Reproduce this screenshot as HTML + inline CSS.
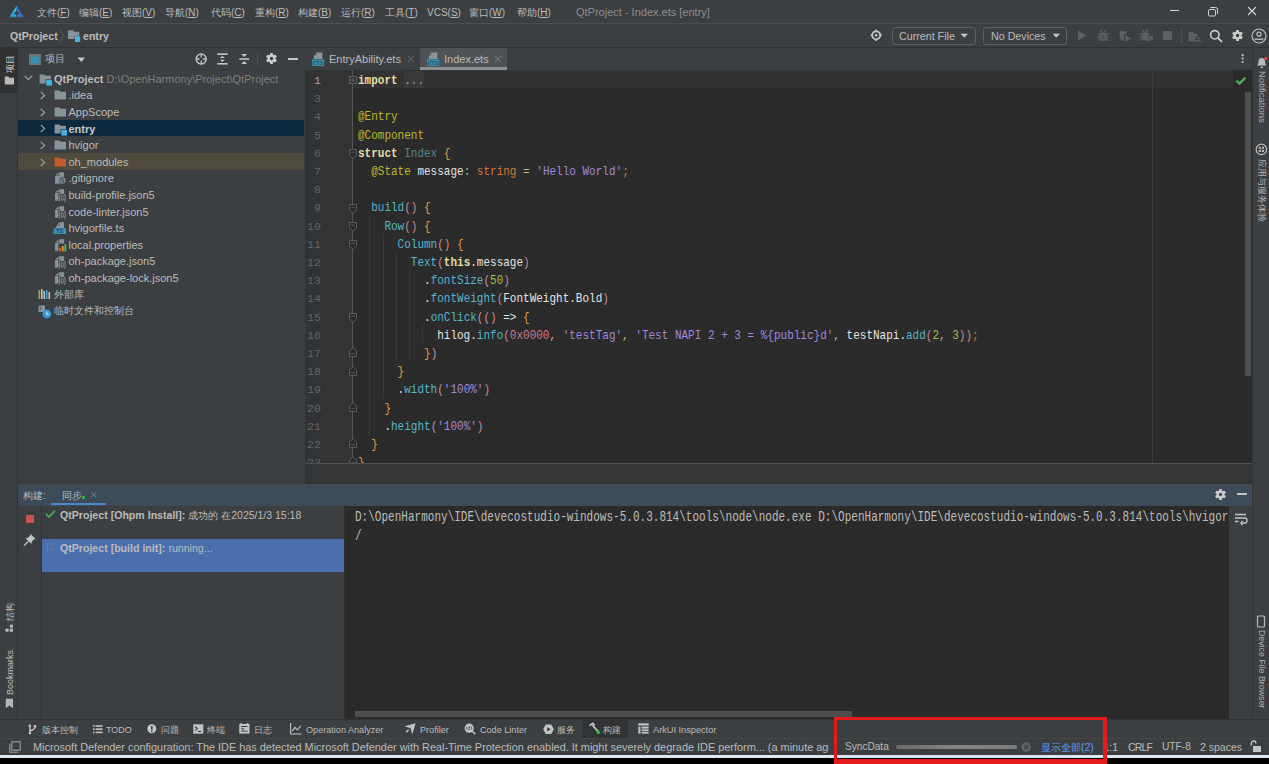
<!DOCTYPE html>
<html><head><meta charset="utf-8">
<style>
*{margin:0;padding:0;box-sizing:border-box}
html,body{width:1269px;height:764px;overflow:hidden;background:#3c3f41}
body{position:relative;font-family:"Liberation Sans",sans-serif;font-size:11px;color:#bbbbbb}
.a{position:absolute}
.t{position:absolute;white-space:nowrap;line-height:14px}
svg.i{position:absolute;overflow:visible}
.mono{font-family:"Liberation Mono",monospace}
#code .l{position:absolute;left:358px;white-space:pre;line-height:18px;transform:scaleY(1.1);transform-origin:0 11.9px;font-family:"Liberation Mono",monospace;font-size:11px;color:#a9b7c6}
.kw{color:#e6dca6;font-weight:bold}
.an{color:#bbb529}
.cl{color:#548585}
.br{color:#e09d3a}
.fn{color:#56b3c9}
.pa{color:#c98aa0}
.st{color:#a087dd}
.ty{color:#cc7832}
.wh{color:#e4e4e4}
.nu{color:#a7c140}
.hx{color:#c9778d}
.op{color:#b8b88c}
.fold{color:#9a9a9a}
.ln{position:absolute;left:305px;width:16px;text-align:right;font-family:"Liberation Mono",monospace;font-size:11.6px;line-height:18px;color:#606366}
.vt{position:absolute;white-space:nowrap;line-height:10px;transform-origin:0 0}
.cj{font-size:10px}
.tt{font-size:9.4px}
</style></head><body>
<div class="a" style="left:0px;top:23px;width:1269px;height:1px;background:#4b4e50;"></div>
<svg class="i" style="left:8px;top:5px;" width="17" height="14" viewBox="0 0 17 14"><defs><linearGradient id="lg1" x1="0" y1="0" x2="0" y2="1"><stop offset="0" stop-color="#43dcec"/><stop offset="1" stop-color="#19a6dc"/></linearGradient>
<linearGradient id="lg2" x1="0" y1="0" x2="0" y2="1"><stop offset="0" stop-color="#2574cf"/><stop offset="1" stop-color="#3f6fd9"/></linearGradient></defs>
<path d="M8.6 1.5 L2 11.8 H7.9 V9.4 H5 L8.6 4.5 Z" fill="url(#lg1)" stroke="url(#lg1)" stroke-width="0.6" stroke-linejoin="round"/>
<path d="M8.6 1.5 L15.2 11.8 H9.3 V9.4 H12.2 L8.6 4.5 Z" fill="url(#lg2)" stroke="url(#lg2)" stroke-width="0.6" stroke-linejoin="round"/></svg>
<div class="t" style="left:37px;top:5.5px;font-size:10px">文件(<u>F</u>)</div>
<div class="t" style="left:79px;top:5.5px;font-size:10px">编辑(<u>E</u>)</div>
<div class="t" style="left:122px;top:5.5px;font-size:10px">视图(<u>V</u>)</div>
<div class="t" style="left:165px;top:5.5px;font-size:10px">导航(<u>N</u>)</div>
<div class="t" style="left:211px;top:5.5px;font-size:10px">代码(<u>C</u>)</div>
<div class="t" style="left:255px;top:5.5px;font-size:10px">重构(<u>R</u>)</div>
<div class="t" style="left:298px;top:5.5px;font-size:10px">构建(<u>B</u>)</div>
<div class="t" style="left:341px;top:5.5px;font-size:10px">运行(<u>R</u>)</div>
<div class="t" style="left:385px;top:5.5px;font-size:10px">工具(<u>T</u>)</div>
<div class="t" style="left:427px;top:5.5px;font-size:10px">VCS(<u>S</u>)</div>
<div class="t" style="left:469px;top:5.5px;font-size:10px">窗口(<u>W</u>)</div>
<div class="t" style="left:517px;top:5.5px;font-size:10px">帮助(<u>H</u>)</div>
<div class="t" style="left:576px;top:5px;color:#8a8d8f">QtProject - Index.ets [entry]</div>
<div class="a" style="left:1170px;top:10px;width:9px;height:1px;background:#d4d4d4;"></div>
<svg class="i" style="left:1207px;top:6px;" width="12" height="11" viewBox="0 0 12 11"><rect x="1.5" y="3.5" width="7" height="6.5" rx="1.2" fill="none" stroke="#d4d4d4" stroke-width="1"/><path d="M3.5 1.5 H8.5 Q10.5 1.5 10.5 3.5 V8" fill="none" stroke="#d4d4d4" stroke-width="1"/></svg>
<svg class="i" style="left:1247px;top:6px;" width="10" height="10" viewBox="0 0 10 10"><path d="M1 1 L9 9 M9 1 L1 9" stroke="#d4d4d4" stroke-width="1.1"/></svg>
<div class="a" style="left:0px;top:47px;width:1269px;height:1px;background:#323232;"></div>
<div class="t" style="left:10px;top:29px;font-weight:bold;font-size:10.6px">QtProject</div>
<svg class="i" style="left:59px;top:29px;" width="6" height="13" viewBox="0 0 6 13"><path d="M1 0.5 L4.5 6.3 L1 12.3" fill="none" stroke="#5b5e60" stroke-width="1"/></svg>
<svg class="i" style="left:67px;top:29px;" width="14" height="14" viewBox="0 0 14 14"><path d="M1 1.2 H5.6 L7.2 2.8 H12.3 V10.1 H1 Z" fill="#87939a"/><rect x="7.6" y="7.2" width="5.5" height="5.8" fill="#3b3f41"/><rect x="8" y="7.4" width="5.2" height="5.6" fill="#40b6e0"/></svg>
<div class="t" style="left:83px;top:29px;font-weight:bold;font-size:10.6px">entry</div>
<svg class="i" style="left:870px;top:29px;" width="13" height="13" viewBox="0 0 13 13"><circle cx="6.2" cy="6.3" r="4" fill="none" stroke="#c4c4c4" stroke-width="1.8"/><circle cx="6.2" cy="6.3" r="1.3" fill="#c4c4c4"/><path d="M6.2 0.6 V2.4 M6.2 10.2 V12 M0.6 6.3 H2.4 M10 6.3 H11.8" stroke="#c4c4c4" stroke-width="1.6"/></svg>
<div class="a" style="left:892px;top:27px;width:84px;height:18px;background:transparent;border:1px solid #5b5e60;border-radius:3px"></div>
<div class="t" style="left:899px;top:29px;font-size:10.7px">Current File</div>
<svg class="i" style="left:960px;top:33px;" width="9" height="6" viewBox="0 0 9 6"><path d="M0.5 0.8 H8 L4.25 4.8 Z" fill="#c4c4c4"/></svg>
<div class="a" style="left:983px;top:27px;width:84px;height:18px;background:transparent;border:1px solid #5b5e60;border-radius:3px"></div>
<div class="t" style="left:991px;top:29px;font-size:10.7px">No Devices</div>
<svg class="i" style="left:1052px;top:33px;" width="9" height="6" viewBox="0 0 9 6"><path d="M0.5 0.8 H8 L4.25 4.8 Z" fill="#c4c4c4"/></svg>
<svg class="i" style="left:1077px;top:30px;" width="10" height="11" viewBox="0 0 10 11"><path d="M1 0.6 L9.2 5.5 L1 10.4 Z" fill="#5d5f61"/></svg>
<svg class="i" style="left:1096px;top:29px;" width="14" height="14" viewBox="0 0 14 14"><ellipse cx="7" cy="7.6" rx="3.4" ry="4.4" fill="#5d5f61"/><path d="M4.2 1 L5.6 3.2 M9.8 1 L8.4 3.2 M1.5 5.2 H4 M10 5.2 H12.5 M1.5 8.2 H4 M10 8.2 H12.5 M1.8 11.4 L4 10.2 M12.2 11.4 L10 10.2" stroke="#5d5f61" stroke-width="1.5"/><rect x="5.6" y="6.4" width="2.8" height="1" fill="#3c3f41"/><rect x="5.6" y="8.6" width="2.8" height="1" fill="#3c3f41"/></svg>
<svg class="i" style="left:1118px;top:30px;" width="15" height="13" viewBox="0 0 15 13"><path d="M1.6 1.2 H8.5 V4 H6.2 V9.6 L4.6 11.2 Q1.6 9.2 1.6 6.2 Z" fill="#5d5f61"/><path d="M7.4 5.2 L13.2 8.6 L7.4 12 Z" fill="#5d5f61"/></svg>
<svg class="i" style="left:1139px;top:29px;" width="15" height="14" viewBox="0 0 15 14"><ellipse cx="6.2" cy="7.4" rx="3.2" ry="4.2" fill="#5d5f61"/><path d="M3.6 1 L5 3 M8.8 1 L7.4 3 M1 5 H3.4 M9 5 H11 M1 8.2 H3.4 M1.4 11.2 L3.4 10" stroke="#5d5f61" stroke-width="1.5"/><path d="M8.2 12.6 L12.6 8.2 M9.6 7.8 H13 V11.2" fill="none" stroke="#5d5f61" stroke-width="1.6"/></svg>
<div class="a" style="left:1163px;top:31px;width:9px;height:9px;background:#5d5f61;"></div>
<div class="a" style="left:1181px;top:28px;width:1px;height:16px;background:#4d5052;"></div>
<svg class="i" style="left:1188px;top:31px;" width="14" height="12" viewBox="0 0 14 12"><path d="M0.6 1 H4.8 L6.2 2.4 H9.4 V5.6 H7 V10.6 H0.6 Z" fill="#5d5f61"/><rect x="7.8" y="6.4" width="2" height="1.8" fill="#5d5f61"/><rect x="10.6" y="6.4" width="2" height="1.8" fill="#5d5f61"/><rect x="7.8" y="9" width="2" height="1.8" fill="#5d5f61"/><rect x="10.6" y="9" width="2" height="1.8" fill="#5d5f61"/></svg>
<svg class="i" style="left:1209px;top:29px;" width="14" height="14" viewBox="0 0 14 14"><circle cx="5.8" cy="5.8" r="4.2" fill="none" stroke="#cbcbcb" stroke-width="1.6"/><path d="M8.9 8.9 L12.4 12.4" stroke="#cbcbcb" stroke-width="1.9" stroke-linecap="round"/></svg>
<svg class="i" style="left:1232px;top:30px;" width="11" height="11" viewBox="0 0 11 11"><rect x="4.07" y="0" width="2.86" height="11.00" rx="0.55" fill="#cbcbcb" transform="rotate(0 5.5 5.5)"/><rect x="4.07" y="0" width="2.86" height="11.00" rx="0.55" fill="#cbcbcb" transform="rotate(60 5.5 5.5)"/><rect x="4.07" y="0" width="2.86" height="11.00" rx="0.55" fill="#cbcbcb" transform="rotate(120 5.5 5.5)"/><circle cx="5.5" cy="5.5" r="3.96" fill="#cbcbcb"/><circle cx="5.5" cy="5.5" r="1.65" fill="#3c3f41"/></svg>
<svg class="i" style="left:1251px;top:28px;" width="16" height="16" viewBox="0 0 16 16"><circle cx="8" cy="8" r="7" fill="none" stroke="#c4c4c4" stroke-width="1.1"/><circle cx="8" cy="6.2" r="2" fill="none" stroke="#c4c4c4" stroke-width="1.2"/><path d="M3.6 11.2 H12.4" stroke="#c4c4c4" stroke-width="1.3"/></svg>
<div class="a" style="left:17px;top:48px;width:1px;height:671px;background:#323232;"></div>
<div class="a" style="left:0px;top:48px;width:17px;height:45px;background:#2f3133;"></div>
<div class="vt" style="left:4.6px;top:72.5px;transform:rotate(-90deg);color:#d0d0d0;font-size:9.4px">项目</div>
<svg class="i" style="left:4px;top:76px;" width="11" height="9" viewBox="0 0 11 9"><path d="M0.8 0.6 H4.2 L5.4 1.8 H10 V8.4 H0.8 Z" fill="#b8b8b8"/></svg>
<div class="vt cj" style="left:5px;top:621px;transform:rotate(-90deg);font-size:9px">结构</div>
<svg class="i" style="left:5px;top:624px;" width="9" height="9" viewBox="0 0 9 9"><rect x="0.5" y="4.6" width="3.2" height="3.2" fill="#b5b5b5"/><rect x="4.8" y="4.6" width="3.2" height="3.2" fill="#b5b5b5"/><rect x="4.8" y="0.6" width="3.2" height="3" fill="#b5b5b5"/></svg>
<div class="vt" style="left:4.5px;top:695px;transform:rotate(-90deg);font-size:9px">Bookmarks</div>
<svg class="i" style="left:5px;top:698px;" width="9" height="11" viewBox="0 0 9 11"><path d="M0.8 0.8 H8 V10.2 L4.4 7.4 L0.8 10.2 Z" fill="#b5b5b5"/></svg>
<div class="a" style="left:304px;top:48px;width:1px;height:436px;background:#3c3f41;"></div>
<div class="a" style="left:18px;top:69px;width:286px;height:1px;background:#383b3d;"></div>
<svg class="i" style="left:28px;top:53px;" width="14" height="13" viewBox="0 0 14 13"><rect x="1" y="1" width="12" height="11" fill="#6e7274"/><rect x="2.6" y="3.6" width="8.8" height="6.8" fill="#3a90b2"/></svg>
<div class="t" style="left:45px;top:52px;font-size:10px">项目</div>
<svg class="i" style="left:77px;top:57px;" width="9" height="6" viewBox="0 0 9 6"><path d="M0.6 0.6 H8 L4.3 5 Z" fill="#c4c4c4"/></svg>
<svg class="i" style="left:195px;top:53px;" width="13" height="13" viewBox="0 0 13 13"><circle cx="6.2" cy="6" r="5" fill="none" stroke="#c4c4c4" stroke-width="1.5"/><path d="M6.2 1.6 V4.4 M6.2 7.6 V10.4 M1.8 6 H4.6 M7.8 6 H10.6" stroke="#c4c4c4" stroke-width="1.3"/></svg>
<svg class="i" style="left:217px;top:53px;" width="11" height="12" viewBox="0 0 11 12"><rect x="0.2" y="0.3" width="10.4" height="1.6" fill="#c4c4c4"/><rect x="0.2" y="10" width="10.4" height="1.6" fill="#c4c4c4"/><path d="M5.4 2.9 L8 5.1 H2.8 Z M5.4 9 L8 6.8 H2.8 Z" fill="#c4c4c4"/></svg>
<svg class="i" style="left:239px;top:53px;" width="11" height="12" viewBox="0 0 11 12"><path d="M5.2 4 L8.2 1 H2.2 Z M5.2 8 L8.2 11 H2.2 Z" fill="#c4c4c4"/><rect x="0.3" y="5.2" width="9.8" height="1.6" fill="#c4c4c4"/></svg>
<div class="a" style="left:257px;top:52px;width:1px;height:14px;background:#4d5052;"></div>
<svg class="i" style="left:266px;top:53px;" width="11" height="11" viewBox="0 0 11 11"><rect x="4.07" y="0" width="2.86" height="11.00" rx="0.55" fill="#cbcbcb" transform="rotate(0 5.5 5.5)"/><rect x="4.07" y="0" width="2.86" height="11.00" rx="0.55" fill="#cbcbcb" transform="rotate(60 5.5 5.5)"/><rect x="4.07" y="0" width="2.86" height="11.00" rx="0.55" fill="#cbcbcb" transform="rotate(120 5.5 5.5)"/><circle cx="5.5" cy="5.5" r="3.96" fill="#cbcbcb"/><circle cx="5.5" cy="5.5" r="1.65" fill="#3c3f41"/></svg>
<div class="a" style="left:288px;top:58px;width:10px;height:2px;background:#c4c4c4;"></div>
<div class="a" style="left:18px;top:120px;width:286px;height:16px;background:#0d293e;"></div>
<div class="a" style="left:18px;top:153px;width:286px;height:16.5px;background:#4e4a3e;"></div>
<svg class="i" style="left:24px;top:75px;" width="9" height="6" viewBox="0 0 9 6"><path d="M0.8 0.8 L4.4 4.6 L8 0.8" fill="none" stroke="#a6a6a6" stroke-width="1.1"/></svg>
<svg class="i" style="left:39px;top:73.5px;" width="14" height="13" viewBox="0 0 14 13"><path d="M0.6 0.4 H5.4 L6.8 1.8 H12 V9.6 H0.6 Z" fill="#87939a"/><rect x="6.6" y="5.4" width="6.4" height="6.4" fill="#3c3f41"/><rect x="7.3" y="6" width="5.6" height="5.6" fill="#40b6e0"/></svg>
<div class="t" style="left:54px;top:72px;"><b>QtProject</b> <span style="color:#7b7e80">D:\OpenHarmony\Project\QtProject</span></div>
<svg class="i" style="left:40px;top:91px;" width="6" height="9" viewBox="0 0 6 9"><path d="M0.8 0.8 L4.6 4.4 L0.8 8" fill="none" stroke="#a6a6a6" stroke-width="1.1"/></svg>
<svg class="i" style="left:53.5px;top:90px;" width="13" height="11" viewBox="0 0 13 11"><path d="M0.6 0.4 H5.4 L6.8 1.8 H12 V9.6 H0.6 Z" fill="#87939a"/></svg>
<div class="t" style="left:68.5px;top:88.4px;">.idea</div>
<svg class="i" style="left:40px;top:108px;" width="6" height="9" viewBox="0 0 6 9"><path d="M0.8 0.8 L4.6 4.4 L0.8 8" fill="none" stroke="#a6a6a6" stroke-width="1.1"/></svg>
<svg class="i" style="left:53.5px;top:107px;" width="13" height="11" viewBox="0 0 13 11"><path d="M0.6 0.4 H5.4 L6.8 1.8 H12 V9.6 H0.6 Z" fill="#87939a"/></svg>
<div class="t" style="left:68.5px;top:105.0px;">AppScope</div>
<svg class="i" style="left:40px;top:124px;" width="6" height="9" viewBox="0 0 6 9"><path d="M0.8 0.8 L4.6 4.4 L0.8 8" fill="none" stroke="#a6a6a6" stroke-width="1.1"/></svg>
<svg class="i" style="left:53.5px;top:124px;" width="14" height="13" viewBox="0 0 14 13"><path d="M0.6 0.4 H5.4 L6.8 1.8 H12 V9.6 H0.6 Z" fill="#87939a"/><rect x="6.6" y="5.4" width="6.4" height="6.4" fill="#0d293e"/><rect x="7.3" y="6" width="5.6" height="5.6" fill="#40b6e0"/></svg>
<div class="t" style="left:68.5px;top:121.6px;font-weight:bold;color:#c8c8c8">entry</div>
<svg class="i" style="left:40px;top:141px;" width="6" height="9" viewBox="0 0 6 9"><path d="M0.8 0.8 L4.6 4.4 L0.8 8" fill="none" stroke="#a6a6a6" stroke-width="1.1"/></svg>
<svg class="i" style="left:53.5px;top:140px;" width="13" height="11" viewBox="0 0 13 11"><path d="M0.6 0.4 H5.4 L6.8 1.8 H12 V9.6 H0.6 Z" fill="#87939a"/></svg>
<div class="t" style="left:68.5px;top:138.2px;">hvigor</div>
<svg class="i" style="left:40px;top:158px;" width="6" height="9" viewBox="0 0 6 9"><path d="M0.8 0.8 L4.6 4.4 L0.8 8" fill="none" stroke="#a6a6a6" stroke-width="1.1"/></svg>
<svg class="i" style="left:53.5px;top:157px;" width="13" height="11" viewBox="0 0 13 11"><path d="M0.6 0.4 H5.4 L6.8 1.8 H12 V9.6 H0.6 Z" fill="#c65a2c"/></svg>
<div class="t" style="left:68.5px;top:154.8px;">oh_modules</div>
<svg class="i" style="left:55px;top:172px;" width="13" height="13" viewBox="0 0 13 13"><path d="M4.3 0.2 H9.1 V11.8 H0.1 V4 H4.3 Z" fill="#87939a"/><path d="M0.4 3.4 L3.6 0.3 V3.4 Z" fill="#87939a"/><circle cx="7.4" cy="8.4" r="3.6" fill="#3c3f41"/><circle cx="7.4" cy="8.4" r="2.6" fill="none" stroke="#87939a" stroke-width="1.1"/><path d="M5.8 10 L9 6.8" stroke="#87939a" stroke-width="1.1"/></svg>
<div class="t" style="left:68.5px;top:171.4px;">.gitignore</div>
<svg class="i" style="left:55px;top:189px;" width="13" height="13" viewBox="0 0 13 13"><path d="M4.3 0.2 H9.1 V11.8 H0.1 V4 H4.3 Z" fill="#87939a"/><path d="M0.4 3.4 L3.6 0.3 V3.4 Z" fill="#87939a"/><path d="M5.2 4.9 Q4.4 4.9 4.4 6 V7.7 Q4.4 8.8 3.6 8.8 Q4.4 8.8 4.4 9.9 V11.6 Q4.4 12.7 5.2 12.7 M9.2 4.9 Q10 4.9 10 6 V7.7 Q10 8.8 10.8 8.8 Q10 8.8 10 9.9 V11.6 Q10 12.7 9.2 12.7" fill="none" stroke="#3c3f41" stroke-width="2.6"/><ellipse cx="7.2" cy="8.8" rx="1.1" ry="2.9" fill="none" stroke="#3c3f41" stroke-width="2.4"/><rect x="5" y="5.4" width="4.4" height="7" fill="#3c3f41"/><path d="M5.2 4.9 Q4.4 4.9 4.4 6 V7.7 Q4.4 8.8 3.6 8.8 Q4.4 8.8 4.4 9.9 V11.6 Q4.4 12.7 5.2 12.7 M9.2 4.9 Q10 4.9 10 6 V7.7 Q10 8.8 10.8 8.8 Q10 8.8 10 9.9 V11.6 Q10 12.7 9.2 12.7" fill="none" stroke="#87939a" stroke-width="1"/><ellipse cx="7.2" cy="8.8" rx="1.1" ry="2.9" fill="none" stroke="#87939a" stroke-width="0.9"/></svg>
<div class="t" style="left:68.5px;top:188.0px;">build-profile.json5</div>
<svg class="i" style="left:55px;top:206px;" width="13" height="13" viewBox="0 0 13 13"><path d="M4.3 0.2 H9.1 V11.8 H0.1 V4 H4.3 Z" fill="#87939a"/><path d="M0.4 3.4 L3.6 0.3 V3.4 Z" fill="#87939a"/><path d="M5.2 4.9 Q4.4 4.9 4.4 6 V7.7 Q4.4 8.8 3.6 8.8 Q4.4 8.8 4.4 9.9 V11.6 Q4.4 12.7 5.2 12.7 M9.2 4.9 Q10 4.9 10 6 V7.7 Q10 8.8 10.8 8.8 Q10 8.8 10 9.9 V11.6 Q10 12.7 9.2 12.7" fill="none" stroke="#3c3f41" stroke-width="2.6"/><ellipse cx="7.2" cy="8.8" rx="1.1" ry="2.9" fill="none" stroke="#3c3f41" stroke-width="2.4"/><rect x="5" y="5.4" width="4.4" height="7" fill="#3c3f41"/><path d="M5.2 4.9 Q4.4 4.9 4.4 6 V7.7 Q4.4 8.8 3.6 8.8 Q4.4 8.8 4.4 9.9 V11.6 Q4.4 12.7 5.2 12.7 M9.2 4.9 Q10 4.9 10 6 V7.7 Q10 8.8 10.8 8.8 Q10 8.8 10 9.9 V11.6 Q10 12.7 9.2 12.7" fill="none" stroke="#87939a" stroke-width="1"/><ellipse cx="7.2" cy="8.8" rx="1.1" ry="2.9" fill="none" stroke="#87939a" stroke-width="0.9"/></svg>
<div class="t" style="left:68.5px;top:204.60000000000002px;">code-linter.json5</div>
<svg class="i" style="left:55px;top:222px;" width="13" height="13" viewBox="0 0 13 13"><path d="M4.3 0.2 H9.1 V6 H1.2 V4 H4.3 Z" fill="#87939a"/><path d="M1.5 3.4 L3.9 0.6 V3.4 Z" fill="#87939a"/><rect x="-1.4" y="6.2" width="12.4" height="5.8" fill="#3a90b2"/><text x="4.6" y="11.3" font-size="5.6" font-family="Liberation Sans" fill="#1d4b5e" text-anchor="middle" font-weight="bold">TS</text></svg>
<div class="t" style="left:68.5px;top:221.2px;">hvigorfile.ts</div>
<svg class="i" style="left:55px;top:239px;" width="13" height="13" viewBox="0 0 13 13"><path d="M4.3 0.2 H9.1 V11.8 H0.1 V4 H4.3 Z" fill="#87939a"/><path d="M0.4 3.4 L3.6 0.3 V3.4 Z" fill="#87939a"/><rect x="3.4" y="4.6" width="8.6" height="8.4" fill="#3c3f41"/><rect x="4.2" y="8.8" width="1.8" height="3.6" fill="#e0632b"/><rect x="6.8" y="7" width="1.8" height="5.4" fill="#e39b2a"/><rect x="9.4" y="5.2" width="1.8" height="7.2" fill="#5fb84a"/></svg>
<div class="t" style="left:68.5px;top:237.8px;">local.properties</div>
<svg class="i" style="left:55px;top:256px;" width="13" height="13" viewBox="0 0 13 13"><path d="M4.3 0.2 H9.1 V11.8 H0.1 V4 H4.3 Z" fill="#87939a"/><path d="M0.4 3.4 L3.6 0.3 V3.4 Z" fill="#87939a"/><path d="M5.2 4.9 Q4.4 4.9 4.4 6 V7.7 Q4.4 8.8 3.6 8.8 Q4.4 8.8 4.4 9.9 V11.6 Q4.4 12.7 5.2 12.7 M9.2 4.9 Q10 4.9 10 6 V7.7 Q10 8.8 10.8 8.8 Q10 8.8 10 9.9 V11.6 Q10 12.7 9.2 12.7" fill="none" stroke="#3c3f41" stroke-width="2.6"/><ellipse cx="7.2" cy="8.8" rx="1.1" ry="2.9" fill="none" stroke="#3c3f41" stroke-width="2.4"/><rect x="5" y="5.4" width="4.4" height="7" fill="#3c3f41"/><path d="M5.2 4.9 Q4.4 4.9 4.4 6 V7.7 Q4.4 8.8 3.6 8.8 Q4.4 8.8 4.4 9.9 V11.6 Q4.4 12.7 5.2 12.7 M9.2 4.9 Q10 4.9 10 6 V7.7 Q10 8.8 10.8 8.8 Q10 8.8 10 9.9 V11.6 Q10 12.7 9.2 12.7" fill="none" stroke="#87939a" stroke-width="1"/><ellipse cx="7.2" cy="8.8" rx="1.1" ry="2.9" fill="none" stroke="#87939a" stroke-width="0.9"/></svg>
<div class="t" style="left:68.5px;top:254.40000000000003px;">oh-package.json5</div>
<svg class="i" style="left:55px;top:272px;" width="13" height="13" viewBox="0 0 13 13"><path d="M4.3 0.2 H9.1 V11.8 H0.1 V4 H4.3 Z" fill="#87939a"/><path d="M0.4 3.4 L3.6 0.3 V3.4 Z" fill="#87939a"/><path d="M5.2 4.9 Q4.4 4.9 4.4 6 V7.7 Q4.4 8.8 3.6 8.8 Q4.4 8.8 4.4 9.9 V11.6 Q4.4 12.7 5.2 12.7 M9.2 4.9 Q10 4.9 10 6 V7.7 Q10 8.8 10.8 8.8 Q10 8.8 10 9.9 V11.6 Q10 12.7 9.2 12.7" fill="none" stroke="#3c3f41" stroke-width="2.6"/><ellipse cx="7.2" cy="8.8" rx="1.1" ry="2.9" fill="none" stroke="#3c3f41" stroke-width="2.4"/><rect x="5" y="5.4" width="4.4" height="7" fill="#3c3f41"/><path d="M5.2 4.9 Q4.4 4.9 4.4 6 V7.7 Q4.4 8.8 3.6 8.8 Q4.4 8.8 4.4 9.9 V11.6 Q4.4 12.7 5.2 12.7 M9.2 4.9 Q10 4.9 10 6 V7.7 Q10 8.8 10.8 8.8 Q10 8.8 10 9.9 V11.6 Q10 12.7 9.2 12.7" fill="none" stroke="#87939a" stroke-width="1"/><ellipse cx="7.2" cy="8.8" rx="1.1" ry="2.9" fill="none" stroke="#87939a" stroke-width="0.9"/></svg>
<div class="t" style="left:68.5px;top:271.0px;">oh-package-lock.json5</div>
<svg class="i" style="left:38px;top:289px;" width="13" height="11" viewBox="0 0 13 11"><rect x="0.5" y="1" width="1.6" height="9" fill="#7ab852"/><rect x="3" y="0" width="1.6" height="10" fill="#c4c4c4"/><rect x="5.5" y="2" width="1.6" height="8" fill="#c4c4c4"/><rect x="8" y="1" width="1.6" height="9" fill="#3a9ad6"/><rect x="10.5" y="3" width="1.6" height="7" fill="#c4c4c4"/></svg>
<div class="t" style="left:54px;top:287.6px;font-size:10px">外部库</div>
<svg class="i" style="left:38px;top:305px;" width="14" height="14" viewBox="0 0 14 14"><path d="M0.5 0.5 H7 V7 H0.5 Z" fill="#87939a"/><path d="M1.6 2 L3.2 3.4 L1.6 4.8" fill="none" stroke="#3c3f41" stroke-width="0.9"/><circle cx="8.8" cy="9" r="4.4" fill="#3a9ad6"/><path d="M8.8 6.6 V9.2 H10.8" fill="none" stroke="#e6f2fa" stroke-width="1"/></svg>
<div class="t" style="left:54px;top:304.20000000000005px;font-size:10px">临时文件和控制台</div>
<div class="a" style="left:420px;top:48px;width:87px;height:22px;background:#4e5254;"></div>
<div class="a" style="left:420px;top:67px;width:87px;height:3px;background:#8d9194;"></div>
<svg class="i" style="left:312px;top:52px;" width="13" height="14" viewBox="0 0 13 14"><path d="M4 0.6 H10.4 V7 H1.8 V3 Z" fill="#8a949b"/><path d="M1.8 3 L4 0.6 V3 Z" fill="#3c3f41"/><path d="M4 0.8 V3.2 H2" fill="none" stroke="#5a5e61" stroke-width="0.7"/><rect x="0" y="7.4" width="12.2" height="6.6" fill="#3a8fae"/><text x="6.1" y="12.7" font-size="5.8" font-family="Liberation Sans" fill="#23556b" text-anchor="middle" font-weight="bold">ETS</text></svg>
<div class="t" style="left:329px;top:52px;">EntryAbility.ets</div>
<svg class="i" style="left:407px;top:55px;" width="8" height="8" viewBox="0 0 8 8"><path d="M0.8 0.8 L7 7 M7 0.8 L0.8 7" stroke="#6e7173" stroke-width="1"/></svg>
<svg class="i" style="left:427px;top:52px;" width="13" height="14" viewBox="0 0 13 14"><path d="M4 0.6 H10.4 V7 H1.8 V3 Z" fill="#8a949b"/><path d="M1.8 3 L4 0.6 V3 Z" fill="#4e5254"/><path d="M4 0.8 V3.2 H2" fill="none" stroke="#5a5e61" stroke-width="0.7"/><rect x="0" y="7.4" width="12.2" height="6.6" fill="#3a8fae"/><text x="6.1" y="12.7" font-size="5.8" font-family="Liberation Sans" fill="#23556b" text-anchor="middle" font-weight="bold">ETS</text></svg>
<div class="t" style="left:444px;top:52px;">Index.ets</div>
<svg class="i" style="left:494px;top:55px;" width="8" height="8" viewBox="0 0 8 8"><path d="M0.8 0.8 L7 7 M7 0.8 L0.8 7" stroke="#75787a" stroke-width="1"/></svg>
<svg class="i" style="left:1241px;top:54px;" width="4" height="10" viewBox="0 0 4 10"><circle cx="1.6" cy="1.2" r="1.1" fill="#c4c4c4"/><circle cx="1.6" cy="4.6" r="1.1" fill="#c4c4c4"/><circle cx="1.6" cy="8" r="1.1" fill="#c4c4c4"/></svg>
<div class="a" style="left:305px;top:70px;width:947px;height:393px;background:#2b2b2b;"></div>
<div class="a" style="left:305px;top:70px;width:47px;height:393px;background:#313335;"></div>
<div class="a" style="left:352px;top:70px;width:881px;height:18px;background:#323232;"></div>
<div class="a" style="left:1152px;top:70px;width:1px;height:393px;background:#3b3b3b;"></div>
<div class="a" style="left:404px;top:70.6px;width:19.5px;height:17.8px;background:#3a3a3a;"></div>
<div class="a" style="left:352px;top:70px;width:1px;height:393px;background:#555555;"></div>
<div class="a" style="left:305px;top:463px;width:947px;height:1px;background:#515151;"></div>
<div class="a" style="left:305px;top:464px;width:947px;height:20px;background:#333537;"></div>
<div class="a" style="left:1233px;top:73px;width:18px;height:17px;background:#2b2b2b;border-radius:3px"></div>
<svg class="i" style="left:1235px;top:76px;" width="12" height="10" viewBox="0 0 12 10"><path d="M1.4 4.6 L4.4 7.6 L10.4 1.6" fill="none" stroke="#4fad5b" stroke-width="2.3"/></svg>
<div class="a" style="left:1245px;top:92px;width:6px;height:284px;background:#4f4f4f;"></div>
<div id="code" class="a" style="left:0;top:0;width:1252px;height:463px;overflow:hidden">
<div class="a" style="left:369px;top:215.6px;width:1px;height:218.4px;background:#393939"></div>
<div class="a" style="left:383px;top:233.8px;width:1px;height:163.8px;background:#393939"></div>
<div class="a" style="left:396px;top:252.0px;width:1px;height:109.2px;background:#393939"></div>
<div class="a" style="left:409px;top:270.2px;width:1px;height:91.0px;background:#393939"></div>
<div class="a" style="left:422px;top:324.8px;width:1px;height:18.2px;background:#393939"></div>
<div class="ln" style="top:72.0px;color:#a4a3a3">1</div>
<div class="l" style="top:72.0px"><span class="kw">import</span> <span class="fold">...</span></div>
<div class="ln" style="top:90.2px;color:#606366">3</div>
<div class="ln" style="top:108.4px;color:#606366">4</div>
<div class="l" style="top:108.4px"><span class="an">@Entry</span></div>
<div class="ln" style="top:126.6px;color:#606366">5</div>
<div class="l" style="top:126.6px"><span class="an">@Component</span></div>
<div class="ln" style="top:144.8px;color:#606366">6</div>
<div class="l" style="top:144.8px"><span class="kw">struct</span> <span class="cl">Index</span> <span class="br">{</span></div>
<div class="ln" style="top:163.0px;color:#606366">7</div>
<div class="l" style="top:163.0px">  <span class="an">@State</span> <span class="wh">message</span><span class="op">:</span> <span class="ty">string</span> <span class="op">=</span> <span class="st">'Hello World'</span><span class="ty">;</span></div>
<div class="ln" style="top:181.2px;color:#606366">8</div>
<div class="ln" style="top:199.4px;color:#606366">9</div>
<div class="l" style="top:199.4px">  <span class="fn">build</span><span class="pa">()</span> <span class="br">{</span></div>
<div class="ln" style="top:217.6px;color:#606366">10</div>
<div class="l" style="top:217.6px">    <span class="fn">Row</span><span class="pa">()</span> <span class="br">{</span></div>
<div class="ln" style="top:235.8px;color:#606366">11</div>
<div class="l" style="top:235.8px">      <span class="fn">Column</span><span class="pa">()</span> <span class="br">{</span></div>
<div class="ln" style="top:254.0px;color:#606366">12</div>
<div class="l" style="top:254.0px">        <span class="fn">Text</span><span class="pa">(</span><span class="kw">this</span><span class="wh">.message</span><span class="pa">)</span></div>
<div class="ln" style="top:272.2px;color:#606366">13</div>
<div class="l" style="top:272.2px">          <span class="wh">.</span><span class="fn">fontSize</span><span class="pa">(</span><span class="nu">50</span><span class="pa">)</span></div>
<div class="ln" style="top:290.4px;color:#606366">14</div>
<div class="l" style="top:290.4px">          <span class="wh">.</span><span class="fn">fontWeight</span><span class="pa">(</span><span class="wh">FontWeight.Bold</span><span class="pa">)</span></div>
<div class="ln" style="top:308.6px;color:#606366">15</div>
<div class="l" style="top:308.6px">          <span class="wh">.</span><span class="fn">onClick</span><span class="pa">(()</span> <span class="wh">=&gt;</span> <span class="br">{</span></div>
<div class="ln" style="top:326.8px;color:#606366">16</div>
<div class="l" style="top:326.8px">            <span class="wh">hilog.</span><span class="fn">info</span><span class="pa">(</span><span class="hx">0x0000</span><span class="op">,</span> <span class="st">'testTag'</span><span class="op">,</span> <span class="st">'Test NAPI 2 + 3 = %{public}d'</span><span class="op">,</span> <span class="wh">testNapi.</span><span class="fn">add</span><span class="pa">(</span><span class="nu">2</span><span class="op">,</span> <span class="nu">3</span><span class="pa">))</span><span class="ty">;</span></div>
<div class="ln" style="top:345.0px;color:#606366">17</div>
<div class="l" style="top:345.0px">          <span class="br">}</span><span class="pa">)</span></div>
<div class="ln" style="top:363.2px;color:#606366">18</div>
<div class="l" style="top:363.2px">      <span class="br">}</span></div>
<div class="ln" style="top:381.4px;color:#606366">19</div>
<div class="l" style="top:381.4px">      <span class="wh">.</span><span class="fn">width</span><span class="pa">(</span><span class="st">'100%'</span><span class="pa">)</span></div>
<div class="ln" style="top:399.6px;color:#606366">20</div>
<div class="l" style="top:399.6px">    <span class="br">}</span></div>
<div class="ln" style="top:417.8px;color:#606366">21</div>
<div class="l" style="top:417.8px">    <span class="wh">.</span><span class="fn">height</span><span class="pa">(</span><span class="st">'100%'</span><span class="pa">)</span></div>
<div class="ln" style="top:436.0px;color:#606366">22</div>
<div class="l" style="top:436.0px">  <span class="br">}</span></div>
<div class="ln" style="top:454.2px;color:#606366">23</div>
<div class="l" style="top:454.2px"><span class="br">}</span></div>
<svg class="i" style="left:349px;top:76px;" width="8" height="8" viewBox="0 0 8 8"><rect x="0.5" y="0.5" width="7" height="7" fill="#323232" stroke="#5a5d5f" stroke-width="1"/><path d="M2 4 H6 M4 2 V6" stroke="#5a5d5f" stroke-width="1"/></svg>
<svg class="i" style="left:349px;top:149px;" width="8" height="10" viewBox="0 0 8 10"><path d="M0.5 0.5 H7.5 V5.8 L4 9.5 L0.5 5.8 Z" fill="#2b2b2b" stroke="#5a5d5f" stroke-width="1"/><path d="M2.2 3.2 H5.8" stroke="#5a5d5f" stroke-width="1"/></svg>
<svg class="i" style="left:349px;top:204px;" width="8" height="10" viewBox="0 0 8 10"><path d="M0.5 0.5 H7.5 V5.8 L4 9.5 L0.5 5.8 Z" fill="#2b2b2b" stroke="#5a5d5f" stroke-width="1"/><path d="M2.2 3.2 H5.8" stroke="#5a5d5f" stroke-width="1"/></svg>
<svg class="i" style="left:349px;top:222px;" width="8" height="10" viewBox="0 0 8 10"><path d="M0.5 0.5 H7.5 V5.8 L4 9.5 L0.5 5.8 Z" fill="#2b2b2b" stroke="#5a5d5f" stroke-width="1"/><path d="M2.2 3.2 H5.8" stroke="#5a5d5f" stroke-width="1"/></svg>
<svg class="i" style="left:349px;top:240px;" width="8" height="10" viewBox="0 0 8 10"><path d="M0.5 0.5 H7.5 V5.8 L4 9.5 L0.5 5.8 Z" fill="#2b2b2b" stroke="#5a5d5f" stroke-width="1"/><path d="M2.2 3.2 H5.8" stroke="#5a5d5f" stroke-width="1"/></svg>
<svg class="i" style="left:349px;top:313px;" width="8" height="10" viewBox="0 0 8 10"><path d="M0.5 0.5 H7.5 V5.8 L4 9.5 L0.5 5.8 Z" fill="#2b2b2b" stroke="#5a5d5f" stroke-width="1"/><path d="M2.2 3.2 H5.8" stroke="#5a5d5f" stroke-width="1"/></svg>
<svg class="i" style="left:349px;top:347px;" width="8" height="10" viewBox="0 0 8 10"><path d="M0.5 9.5 H7.5 V4.2 L4 0.5 L0.5 4.2 Z" fill="#2b2b2b" stroke="#5a5d5f" stroke-width="1"/><path d="M2.2 6.8 H5.8" stroke="#5a5d5f" stroke-width="1"/></svg>
<svg class="i" style="left:349px;top:366px;" width="8" height="10" viewBox="0 0 8 10"><path d="M0.5 9.5 H7.5 V4.2 L4 0.5 L0.5 4.2 Z" fill="#2b2b2b" stroke="#5a5d5f" stroke-width="1"/><path d="M2.2 6.8 H5.8" stroke="#5a5d5f" stroke-width="1"/></svg>
<svg class="i" style="left:349px;top:402px;" width="8" height="10" viewBox="0 0 8 10"><path d="M0.5 9.5 H7.5 V4.2 L4 0.5 L0.5 4.2 Z" fill="#2b2b2b" stroke="#5a5d5f" stroke-width="1"/><path d="M2.2 6.8 H5.8" stroke="#5a5d5f" stroke-width="1"/></svg>
<svg class="i" style="left:349px;top:438px;" width="8" height="10" viewBox="0 0 8 10"><path d="M0.5 9.5 H7.5 V4.2 L4 0.5 L0.5 4.2 Z" fill="#2b2b2b" stroke="#5a5d5f" stroke-width="1"/><path d="M2.2 6.8 H5.8" stroke="#5a5d5f" stroke-width="1"/></svg>
<svg class="i" style="left:349px;top:456px;" width="8" height="10" viewBox="0 0 8 10"><path d="M0.5 9.5 H7.5 V4.2 L4 0.5 L0.5 4.2 Z" fill="#2b2b2b" stroke="#5a5d5f" stroke-width="1"/><path d="M2.2 6.8 H5.8" stroke="#5a5d5f" stroke-width="1"/></svg>
</div>
<div class="a" style="left:18px;top:484px;width:1234px;height:21.6px;background:#3d4a58;"></div>
<div class="a" style="left:41px;top:505px;width:1px;height:214px;background:#323232;"></div>
<div class="a" style="left:42px;top:539px;width:302px;height:33px;background:#4b6eaf;"></div>
<div class="a" style="left:344px;top:505px;width:1px;height:214px;background:#323232;"></div>
<div class="a" style="left:345px;top:505.6px;width:884px;height:213.4px;background:#2b2b2b;"></div>
<div class="a" style="left:355px;top:711px;width:497px;height:6px;background:#4d4d4d;"></div>
<div class="t" style="left:23px;top:488.5px;font-size:10px">构建:</div>
<div class="t" style="left:62px;top:488.5px;font-size:10px">同步</div>
<div class="a" style="left:82px;top:496px;width:3px;height:3px;background:#22d33a;border-radius:50%"></div>
<svg class="i" style="left:90px;top:491px;" width="8" height="8" viewBox="0 0 8 8"><path d="M0.8 0.8 L6.6 6.6 M6.6 0.8 L0.8 6.6" stroke="#7a7d7f" stroke-width="1"/></svg>
<div class="a" style="left:51px;top:503px;width:55px;height:2px;background:#4a88c7;border-radius:1px"></div>
<svg class="i" style="left:1215px;top:489px;" width="11" height="11" viewBox="0 0 11 11"><rect x="4.07" y="0" width="2.86" height="11.00" rx="0.55" fill="#cbcbcb" transform="rotate(0 5.5 5.5)"/><rect x="4.07" y="0" width="2.86" height="11.00" rx="0.55" fill="#cbcbcb" transform="rotate(60 5.5 5.5)"/><rect x="4.07" y="0" width="2.86" height="11.00" rx="0.55" fill="#cbcbcb" transform="rotate(120 5.5 5.5)"/><circle cx="5.5" cy="5.5" r="3.96" fill="#cbcbcb"/><circle cx="5.5" cy="5.5" r="1.65" fill="#3d4a58"/></svg>
<div class="a" style="left:1237px;top:493px;width:10px;height:2px;background:#c4c4c4;"></div>
<div class="a" style="left:26px;top:515px;width:8px;height:8px;background:#c75450;"></div>
<svg class="i" style="left:23px;top:533px;" width="14" height="14" viewBox="0 0 14 14"><path d="M7.6 1 L12.6 6 L10.8 6.6 L8.8 8.6 L8.4 11 L2.6 5.2 L5 4.8 L7 2.8 Z" fill="#c4c4c4"/><path d="M5.4 8.2 L1 12.6" stroke="#c4c4c4" stroke-width="1.3"/></svg>
<svg class="i" style="left:45px;top:509px;" width="11" height="10" viewBox="0 0 11 10"><path d="M1 5 L4 8 L10 1.6" fill="none" stroke="#499c54" stroke-width="1.9"/></svg>
<svg class="i" style="left:45px;top:542px;" width="10" height="10" viewBox="0 0 10 10"><path d="M7.40 5.00 L9.60 5.00" stroke="#8d8f93" stroke-width="1" opacity="0.40"/><path d="M6.70 6.70 L8.25 8.25" stroke="#8d8f93" stroke-width="1" opacity="0.47"/><path d="M5.00 7.40 L5.00 9.60" stroke="#8d8f93" stroke-width="1" opacity="0.54"/><path d="M3.30 6.70 L1.75 8.25" stroke="#8d8f93" stroke-width="1" opacity="0.61"/><path d="M2.60 5.00 L0.40 5.00" stroke="#8d8f93" stroke-width="1" opacity="0.68"/><path d="M3.30 3.30 L1.75 1.75" stroke="#8d8f93" stroke-width="1" opacity="0.75"/><path d="M5.00 2.60 L5.00 0.40" stroke="#8d8f93" stroke-width="1" opacity="0.82"/><path d="M6.70 3.30 L8.25 1.75" stroke="#8d8f93" stroke-width="1" opacity="0.89"/></svg>
<div class="t" style="left:60px;top:508px;"><b style="font-size:10.6px">QtProject [Ohpm Install]:</b> <span class="cj">成功的 在</span><span style="font-size:10.5px">2025/1/3 15:18</span></div>
<div class="t" style="left:60px;top:541px;"><b style="font-size:10.6px">QtProject [build init]:</b> <span style="font-size:10.6px">running...</span></div>
<div class="a mono" style="left:355px;top:508px;white-space:pre;line-height:14.4px;color:#bbbbbb;letter-spacing:0.016px;transform:scaleY(1.27);transform-origin:0 0">D:\OpenHarmony\IDE\devecostudio-windows-5.0.3.814\tools\node\node.exe D:\OpenHarmony\IDE\devecostudio-windows-5.0.3.814\tools\hvigor</div>
<div class="a mono" style="left:355px;top:526.8px;white-space:pre;line-height:14.4px;color:#bbbbbb;transform:scaleY(1.27);transform-origin:0 0">/</div>
<svg class="i" style="left:1234px;top:513px;" width="14" height="13" viewBox="0 0 14 13"><path d="M1 1.5 H12 M1 5 H11 Q13 5 13 7.5 Q13 10 11 10 H7.5 M1 8.5 H4.5" fill="none" stroke="#c4c4c4" stroke-width="1.3"/><path d="M8.6 8 L6.8 10 L8.6 12" fill="none" stroke="#c4c4c4" stroke-width="1.2"/></svg>
<div class="a" style="left:1252px;top:48px;width:1px;height:671px;background:#323232;"></div>
<svg class="i" style="left:1256px;top:56px;" width="12" height="13" viewBox="0 0 12 13"><path d="M1 9.6 Q2.5 8.4 2.5 5.5 Q2.5 2 5.8 2 Q9 2 9 5.5 Q9 8.4 10.6 9.6 Z" fill="#b9b9b9"/><rect x="4.4" y="10.4" width="2.8" height="1.6" rx="0.8" fill="#b9b9b9"/><circle cx="9.8" cy="2.6" r="1.8" fill="#d9433a"/></svg>
<div class="vt" style="left:1267px;top:71px;transform:rotate(90deg);font-size:9.5px;color:#b0b0b0">Notifications</div>
<svg class="i" style="left:1255px;top:143px;" width="13" height="13" viewBox="0 0 13 13"><circle cx="6.4" cy="6.4" r="5.2" fill="none" stroke="#b9b9b9" stroke-width="1.2"/><rect x="3.8" y="3.8" width="2.1" height="2.1" fill="#b9b9b9"/><rect x="6.9" y="3.8" width="2.1" height="2.1" fill="#b9b9b9"/><rect x="3.8" y="6.9" width="2.1" height="2.1" fill="#b9b9b9"/><rect x="6.9" y="6.9" width="2.1" height="2.1" fill="#b9b9b9"/></svg>
<div class="vt cj" style="left:1267px;top:159px;transform:rotate(90deg);font-size:8.7px;color:#b0b0b0">应用与服务体验</div>
<svg class="i" style="left:1256px;top:615px;" width="10" height="14" viewBox="0 0 10 14"><rect x="1.5" y="1" width="7" height="11" rx="1" fill="none" stroke="#b9b9b9" stroke-width="1.2"/></svg>
<div class="vt" style="left:1267px;top:630px;transform:rotate(90deg);font-size:8.8px;color:#b0b0b0">Device File Browser</div>
<div class="a" style="left:0px;top:719px;width:1269px;height:1px;background:#323232;"></div>
<div class="a" style="left:582px;top:720px;width:46px;height:18px;background:#313335;"></div>
<svg class="i" style="left:28px;top:724px;" width="9" height="11" viewBox="0 0 9 11"><circle cx="1.8" cy="1.8" r="1.3" fill="#c4c4c4"/><circle cx="7" cy="2.2" r="1.3" fill="#c4c4c4"/><circle cx="2" cy="9" r="1.3" fill="#c4c4c4"/><path d="M1.9 2 V9 M7 2.4 Q7 5.6 2 6.6" fill="none" stroke="#c4c4c4" stroke-width="1.4"/></svg>
<div class="t" style="left:42px;top:722.5px;font-size:9px">版本控制</div>
<svg class="i" style="left:93px;top:725px;" width="10" height="9" viewBox="0 0 10 9"><rect x="0" y="0.2" width="1.6" height="1.6" fill="#c4c4c4"/><rect x="2.6" y="0.2" width="7" height="1.6" fill="#c4c4c4"/><rect x="0" y="3.4" width="1.6" height="1.6" fill="#c4c4c4"/><rect x="2.6" y="3.4" width="7" height="1.6" fill="#c4c4c4"/><rect x="0" y="6.6" width="1.6" height="1.6" fill="#c4c4c4"/><rect x="2.6" y="6.6" width="7" height="1.6" fill="#c4c4c4"/></svg>
<div class="t" style="left:106px;top:722.5px;font-size:9px">TODO</div>
<svg class="i" style="left:147px;top:724px;" width="10" height="10" viewBox="0 0 10 10"><circle cx="4.8" cy="4.8" r="4.5" fill="#c4c4c4"/><rect x="4" y="2" width="1.6" height="3.8" fill="#3c3f41"/><rect x="4" y="6.6" width="1.6" height="1.5" fill="#3c3f41"/></svg>
<div class="t" style="left:161px;top:722.5px;font-size:9px">问题</div>
<svg class="i" style="left:193px;top:724px;" width="11" height="10" viewBox="0 0 11 10"><rect x="0.3" y="0.3" width="10" height="9.4" fill="#c4c4c4"/><path d="M2 2.6 L4.4 4.6 L2 6.6" fill="none" stroke="#3c3f41" stroke-width="1.1"/><rect x="5" y="6.8" width="3" height="1.2" fill="#3c3f41"/></svg>
<div class="t" style="left:207px;top:722.5px;font-size:9px">终端</div>
<svg class="i" style="left:239px;top:723px;" width="11" height="11" viewBox="0 0 11 11"><rect x="0.3" y="1" width="10.2" height="9.6" fill="#c4c4c4"/><rect x="1.6" y="0" width="1.4" height="2" fill="#c4c4c4"/><rect x="7.8" y="0" width="1.4" height="2" fill="#c4c4c4"/><rect x="2" y="3" width="6.6" height="1" fill="#3c3f41"/><rect x="2" y="5.4" width="3.4" height="1" fill="#3c3f41"/><rect x="2" y="7.6" width="6.6" height="1" fill="#3c3f41"/></svg>
<div class="t" style="left:254px;top:722.5px;font-size:9px">日志</div>
<svg class="i" style="left:290px;top:723px;" width="12" height="12" viewBox="0 0 12 12"><path d="M0.6 0 V11 H11.4" fill="none" stroke="#c4c4c4" stroke-width="1.1"/><path d="M2.2 8.2 L5 4.4 L7.4 7 L10.8 2.6" fill="none" stroke="#c4c4c4" stroke-width="1.1"/></svg>
<div class="t" style="left:306px;top:722.5px;font-size:9.1px">Operation Analyzer</div>
<svg class="i" style="left:404px;top:723px;" width="12" height="12" viewBox="0 0 12 12"><path d="M0.4 3.2 L11.6 0.2 L8.2 11.6 L6.6 5.2 Z" fill="#c4c4c4"/><path d="M2.2 9.2 L4.6 6.8" stroke="#c4c4c4" stroke-width="1.6"/></svg>
<div class="t" style="left:420px;top:722.5px;font-size:9.1px">Profiler</div>
<svg class="i" style="left:464px;top:723px;" width="12" height="12" viewBox="0 0 12 12"><circle cx="5.2" cy="5.2" r="4.6" fill="#c4c4c4"/><path d="M8.4 8.4 L11.2 11.2" stroke="#c4c4c4" stroke-width="1.6"/><path d="M3.6 3.6 L2.4 5.2 L3.6 6.8 M6.8 3.6 L8 5.2 L6.8 6.8 M5.8 3.2 L4.6 7.2" fill="none" stroke="#3c3f41" stroke-width="0.8"/></svg>
<div class="t" style="left:480px;top:722.5px;font-size:9.1px">Code Linter</div>
<svg class="i" style="left:543px;top:724px;" width="11" height="11" viewBox="0 0 11 11"><path d="M2.7 0.5 H8.3 L10.8 5.3 L8.3 10.1 H2.7 L0.2 5.3 Z" fill="#c4c4c4"/><path d="M4.2 3 L7.6 5.3 L4.2 7.6 Z" fill="#3c3f41"/></svg>
<div class="t" style="left:557px;top:722.5px;font-size:9px">服务</div>
<svg class="i" style="left:589px;top:723px;" width="12" height="12" viewBox="0 0 12 12"><path d="M0.6 2.6 L3.6 0.4 L5 1.6 L4 2.8 L9.2 8.6" fill="none" stroke="#c4c4c4" stroke-width="1.7"/><circle cx="9.4" cy="9.4" r="1.8" fill="#18c22c"/></svg>
<div class="t" style="left:603px;top:722.5px;font-size:9px">构建</div>
<svg class="i" style="left:638px;top:723px;" width="11" height="11" viewBox="0 0 11 11"><rect x="0.3" y="0.3" width="10.4" height="2.2" fill="#c4c4c4"/><rect x="0.3" y="3.6" width="2.2" height="7" fill="#c4c4c4"/><rect x="3.6" y="3.6" width="7" height="2" fill="#c4c4c4"/><rect x="3.6" y="6.4" width="7" height="1.8" fill="#c4c4c4"/><rect x="3.6" y="9" width="7" height="1.7" fill="#c4c4c4"/></svg>
<div class="t" style="left:653px;top:722.5px;font-size:9.2px">ArkUI Inspector</div>
<div class="a" style="left:0px;top:738px;width:1269px;height:1px;background:#48443f;"></div>
<div class="a" style="left:0px;top:755px;width:1269px;height:3px;background:#dde8f2;"></div>
<div class="a" style="left:0px;top:758px;width:1269px;height:6px;background:#000;"></div>
<svg class="i" style="left:9px;top:741px;" width="12" height="12" viewBox="0 0 12 12"><rect x="2.8" y="0.8" width="8.4" height="8.4" fill="none" stroke="#9a9a9a" stroke-width="1.1"/><path d="M0.8 2.8 V11.2 H9.2" fill="none" stroke="#9a9a9a" stroke-width="1.1"/></svg>
<div class="t" style="left:33px;top:740px;width:796px;overflow:hidden;font-size:10.9px">Microsoft Defender configuration: The IDE has detected Microsoft Defender with Real-Time Protection enabled. It might severely degrade IDE perform... (a minute ago)</div>
<div class="t" style="left:845px;top:740px;font-size:10.1px">SyncData</div>
<div class="a" style="left:896px;top:745px;width:121px;height:4px;border-radius:2px;background:linear-gradient(90deg,#6a6a6a,#858585 50%,#7a7a7a)"></div>
<svg class="i" style="left:1021px;top:742px;" width="11" height="11" viewBox="0 0 11 11"><circle cx="5.2" cy="5.2" r="4.8" fill="#5f6264"/><path d="M3.2 3.2 L7.2 7.2 M7.2 3.2 L3.2 7.2" stroke="#3c3f41" stroke-width="1.1"/></svg>
<div class="t" style="left:1041px;top:740px;color:#589df6;font-size:10.5px"><span class="cj">显示全部</span>(2)</div>
<div class="t" style="left:1103.5px;top:740px;font-size:10.5px">1:1</div>
<div class="t" style="left:1128px;top:740px;font-size:10.5px;letter-spacing:-0.8px">CRLF</div>
<div class="t" style="left:1162px;top:740px;font-size:10.2px">UTF-8</div>
<div class="t" style="left:1200px;top:740px;font-size:10.5px">2 spaces</div>
<svg class="i" style="left:1249px;top:740px;" width="13" height="13" viewBox="0 0 13 13"><path d="M2.4 5.4 V3.6 Q2.4 1 4.8 1 Q7 1 7 3.4" fill="none" stroke="#c4c4c4" stroke-width="1.3"/><rect x="4" y="6" width="8" height="6" fill="#c4c4c4"/></svg>
<div class="a" style="left:834px;top:717px;width:273px;height:47px;border-style:solid;border-color:#e31b1d;border-width:3.5px 4px 5.4px 3.5px"></div>
</body></html>
